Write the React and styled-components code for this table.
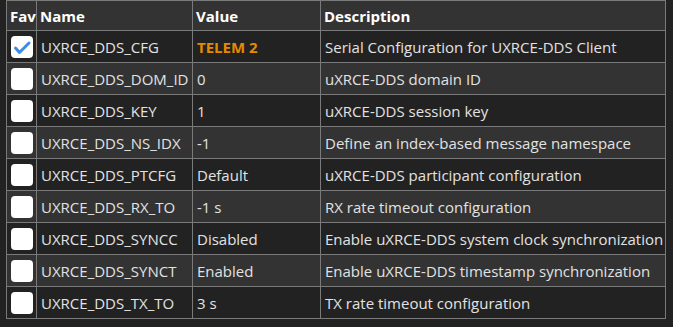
import React from "react";
import styled, { createGlobalStyle } from "styled-components";

const GlobalStyle = createGlobalStyle`
  body {
    margin: 0;
    background: #222222;
    font-family: "Open Sans", "DejaVu Sans", sans-serif;
  }
`;

const Wrapper = styled.div`
  padding: 0 7px 0 6px;
`;

const Table = styled.table`
  border-collapse: collapse;
  width: 660px;
  table-layout: fixed;
  font-size: 15px;
  color: #e2e2e2;
`;

const HeadCell = styled.th`
  border: 1px solid #7a7a7a;
  background: #333333;
  color: #ffffff;
  font-weight: 700;
  text-align: left;
  padding: 0 3px;
  height: 30px;
  width: ${(props) => props.w}px;
  box-sizing: border-box;
`;

const Row = styled.tr`
  background: ${(props) => (props.odd ? "#222222" : "#333333")};
`;

const Cell = styled.td`
  border: 1px solid #7a7a7a;
  padding: 0 4px;
  height: 31px;
  white-space: nowrap;
  color: ${(props) => (props.accent ? "#e48a00" : "#e2e2e2")};
  font-weight: ${(props) => (props.accent ? 700 : 400)};
`;

const FavCell = styled.td`
  border: 1px solid #7a7a7a;
  padding: 0;
  text-align: center;
  vertical-align: middle;
`;

const Box = styled.div`
  width: 22px;
  height: 22px;
  margin: 0 auto;
  border-radius: 4px;
  background: #ffffff;
  display: flex;
`;

const Check = () => (
  <svg width="22" height="22" viewBox="0 0 22 22">
    <path
      d="M4.5 12 L8.5 16.5 L18 7"
      fill="none"
      stroke="#3a8ee6"
      strokeWidth="3"
      strokeLinecap="round"
      strokeLinejoin="round"
    />
  </svg>
);

const params = [
  ["UXRCE_DDS_CFG", "TELEM 2", "Serial Configuration for UXRCE-DDS Client", true],
  ["UXRCE_DDS_DOM_ID", "0", "uXRCE-DDS domain ID"],
  ["UXRCE_DDS_KEY", "1", "uXRCE-DDS session key"],
  ["UXRCE_DDS_NS_IDX", "-1", "Define an index-based message namespace"],
  ["UXRCE_DDS_PTCFG", "Default", "uXRCE-DDS participant configuration"],
  ["UXRCE_DDS_RX_TO", "-1 s", "RX rate timeout configuration"],
  ["UXRCE_DDS_SYNCC", "Disabled", "Enable uXRCE-DDS system clock synchronization"],
  ["UXRCE_DDS_SYNCT", "Enabled", "Enable uXRCE-DDS timestamp synchronization"],
  ["UXRCE_DDS_TX_TO", "3 s", "TX rate timeout configuration"],
];

const App = () => {
  return (
    <Wrapper>
      <GlobalStyle />
      <Table>
        <thead>
          <tr>
            <HeadCell w={30}>Fav</HeadCell>
            <HeadCell w={156}>Name</HeadCell>
            <HeadCell w={128}>Value</HeadCell>
            <HeadCell w={345}>Description</HeadCell>
          </tr>
        </thead>
        <tbody>
          {params.map(([name, value, desc, fav], i) => (
            <Row key={name} odd={i % 2 === 0}>
              <FavCell>
                <Box>{fav && <Check />}</Box>
              </FavCell>
              <Cell>{name}</Cell>
              <Cell accent={fav}>{value}</Cell>
              <Cell>{desc}</Cell>
            </Row>
          ))}
        </tbody>
      </Table>
    </Wrapper>
  );
};

export default App;
